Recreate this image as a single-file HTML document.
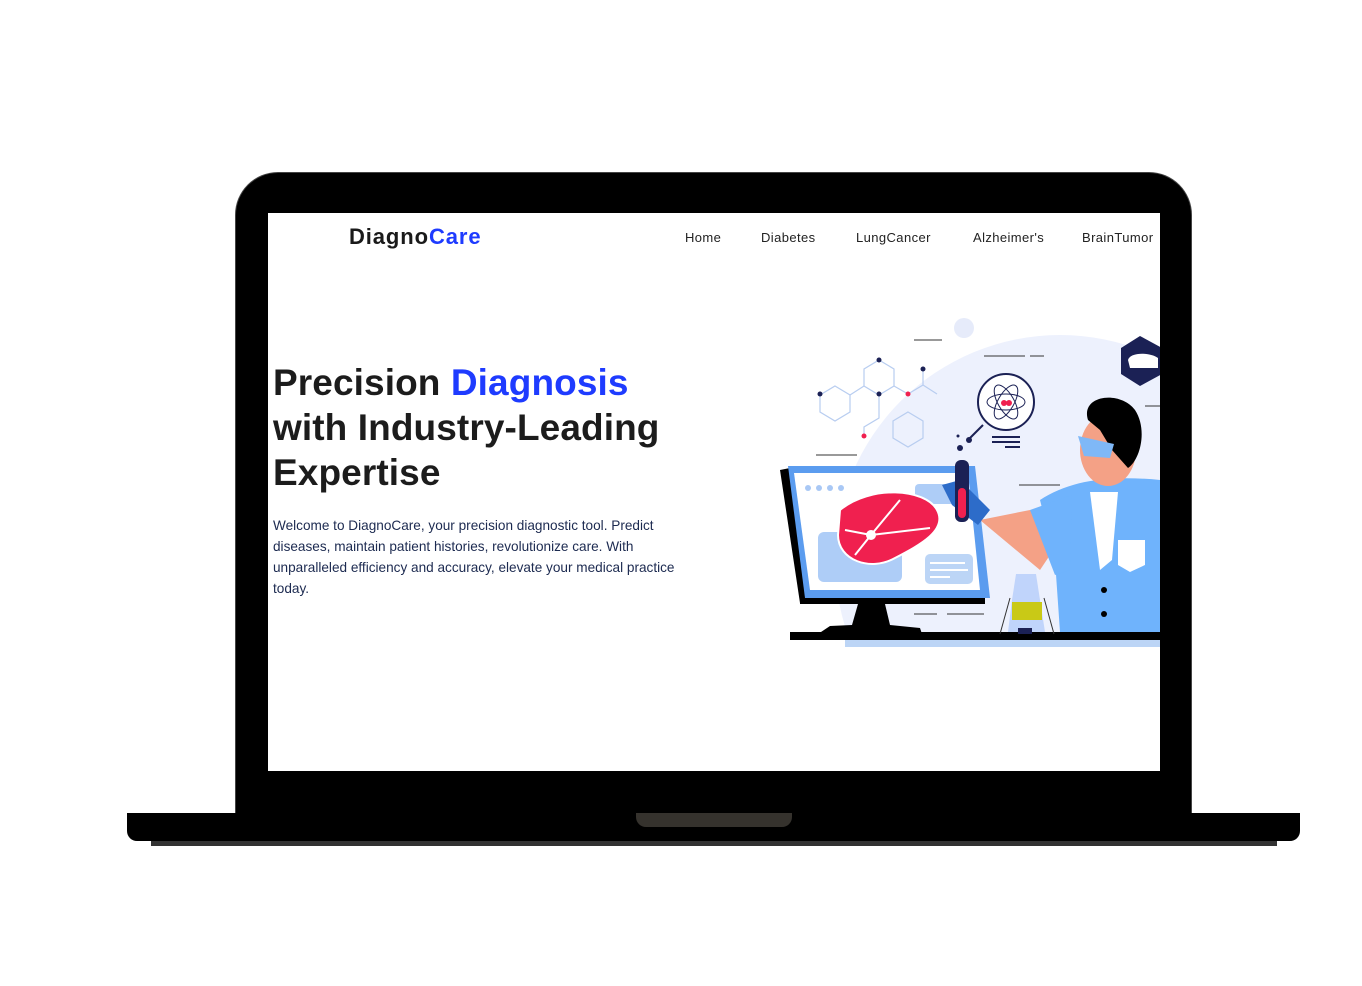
<!DOCTYPE html>
<html><head><meta charset="utf-8"><style>
html,body{margin:0;padding:0;width:1362px;height:986px;background:#fff;overflow:hidden;position:relative;font-family:"Liberation Sans",sans-serif}
.bezel{position:absolute;left:236px;top:173px;width:955px;height:640px;background:#000;border-radius:42px 42px 0 0;box-shadow:0 0 0 1px #444}
.screen{position:absolute;left:268px;top:213px;width:892px;height:558px;background:#fff;overflow:hidden}
.base{position:absolute;left:127px;top:813px;width:1173px;height:28px;background:#000;border-radius:0 0 10px 10px}
.shadow{position:absolute;left:151px;top:841px;width:1126px;height:5px;background:#333}
.notch{position:absolute;left:636px;top:813px;width:156px;height:14px;background:#35322d;border-radius:0 0 10px 10px}
.logo{position:absolute;left:81px;top:11px;font-size:22px;font-weight:bold;color:#1a1a1a;letter-spacing:.9px}
.logo span{color:#1e3bff}
.nav{position:absolute;top:17px;font-size:13px;color:#222;letter-spacing:.4px}
h1{position:absolute;left:5px;top:147px;margin:0;font-size:37px;line-height:45px;font-weight:bold;color:#1c1c1c;letter-spacing:.1px}
h1 span{color:#1e3bff}
p{position:absolute;left:5px;top:302px;width:420px;margin:0;font-size:13.6px;line-height:21px;color:#1c2a50}
</style></head><body>
<div class="bezel"></div>
<div class="screen">
<div class="logo">Diagno<span>Care</span></div>
<div class="nav" style="left:417px">Home</div>
<div class="nav" style="left:493px">Diabetes</div>
<div class="nav" style="left:588px">LungCancer</div>
<div class="nav" style="left:705px">Alzheimer's</div>
<div class="nav" style="left:814px">BrainTumor</div>
<h1>Precision <span>Diagnosis</span><br>with Industry-Leading<br>Expertise</h1>
<p>Welcome to DiagnoCare, your precision diagnostic tool. Predict diseases, maintain patient histories, revolutionize care. With unparalleled efficiency and accuracy, elevate your medical practice today.</p>
<svg style="position:absolute;left:-268px;top:-213px" width="1362" height="986">
<defs><clipPath id="c"><rect x="700" y="300" width="460" height="336"/></clipPath></defs>
<circle cx="1060" cy="560" r="225" fill="#edf1fd" clip-path="url(#c)"/>
<circle cx="964" cy="328" r="10" fill="#e6ebfa"/>
<g stroke="#333" stroke-width="1"><line x1="914" y1="340" x2="942" y2="340"/><line x1="984" y1="356" x2="1025" y2="356"/><line x1="1030" y1="356" x2="1044" y2="356"/><line x1="816" y1="455" x2="857" y2="455"/><line x1="1019" y1="485" x2="1060" y2="485"/><line x1="914" y1="614" x2="937" y2="614"/><line x1="947" y1="614" x2="984" y2="614"/><line x1="1145" y1="406" x2="1160" y2="406"/></g>
<g fill="none" stroke="#b8cdf0" stroke-width="1.2"><path d="M835,386 L850,395 L850,412 L835,421 L820,412 L820,395Z"/><path d="M879,360 L894,369 L894,386 L879,395 L864,386 L864,369Z"/><path d="M908,412 L923,421 L923,438 L908,447 L893,438 L893,421Z"/><path d="M850,395 L864,386 M879,395 L879,418 L864,427 L864,436 M908,394 L923,385 L923,370 M923,385 L937,394 M894,386 L908,394"/></g>
<g fill="#1b2155"><circle cx="879" cy="360" r="2.5"/><circle cx="820" cy="394" r="2.5"/><circle cx="879" cy="394" r="2.5"/><circle cx="923" cy="369" r="2.5"/><circle cx="960" cy="448" r="3"/><circle cx="969" cy="440" r="3"/><circle cx="958" cy="436" r="1.5"/></g>
<g fill="#f0204f"><circle cx="908" cy="394" r="2.5"/><circle cx="864" cy="436" r="2.5"/></g>
<circle cx="1006" cy="402" r="28" fill="#fff" stroke="#1b2155" stroke-width="2"/>
<g fill="none" stroke="#1b2155" stroke-width="1"><ellipse cx="1006" cy="402" rx="19" ry="8"/><ellipse cx="1006" cy="402" rx="19" ry="8" transform="rotate(60 1006 402)"/><ellipse cx="1006" cy="402" rx="19" ry="8" transform="rotate(-60 1006 402)"/></g>
<circle cx="1004" cy="403" r="3" fill="#f0204f"/><circle cx="1009" cy="403" r="3" fill="#f0204f"/>
<g stroke="#1b2155" stroke-width="2"><line x1="992" y1="437" x2="1020" y2="437"/><line x1="992" y1="442" x2="1020" y2="442"/><line x1="1005" y1="447" x2="1020" y2="447"/><line x1="983" y1="425" x2="970" y2="438"/></g>
<path d="M1140,336 L1162,348 L1162,374 L1140,386 L1121,374 L1121,348Z" fill="#1b2155"/>
<path d="M1128,360 C1130,352 1150,352 1158,358 L1158,368 L1130,368Z" fill="#fff"/>
<!-- monitor -->
<path d="M780,470 L790,468 L808,603 L800,603Z" fill="#000"/>
<path d="M800,598 L985,598 L985,604 L800,604Z" fill="#000"/>
<path d="M788,466 L975,466 L990,598 L805,598Z" fill="#5b9cef"/>
<path d="M794,473 L968,473 L980,590 L810,590Z" fill="#fff"/>
<g fill="#a9c8f5"><circle cx="808" cy="488" r="3"/><circle cx="819" cy="488" r="3"/><circle cx="830" cy="488" r="3"/><circle cx="841" cy="488" r="3"/></g>
<rect x="818" y="532" width="84" height="50" rx="6" fill="#aecdf7"/>
<rect x="925" y="554" width="48" height="30" rx="5" fill="#bcd5f6"/>
<g stroke="#fff" stroke-width="2"><line x1="930" y1="563" x2="965" y2="563"/><line x1="930" y1="570" x2="968" y2="570"/><line x1="930" y1="577" x2="950" y2="577"/></g>
<rect x="915" y="484" width="40" height="20" rx="4" fill="#aecdf7"/>
<path d="M840,510 C870,485 925,488 937,510 C948,530 920,545 895,558 C870,572 838,560 838,535Z" fill="#f0204f" stroke="#fff" stroke-width="2"/>
<g fill="none" stroke="#fff" stroke-width="2"><path d="M871,535 L900,500 M871,535 L845,530 M871,535 L930,528 M871,535 L855,555"/></g>
<circle cx="871" cy="535" r="5" fill="#fff"/>
<path d="M858,604 L885,604 L890,625 L920,628 L922,634 L818,634 L830,626 L852,625Z" fill="#000"/>
<rect x="790" y="632" width="370" height="8" fill="#000"/>
<rect x="845" y="640" width="315" height="7" fill="#bcd5f6"/>
<!-- flask -->
<path d="M1016,574 L1036,574 L1040,600 L1045,632 L1008,632 L1012,600Z" fill="#c0d4fb"/>
<rect x="1012" y="602" width="30" height="18" fill="#c9c916"/>
<rect x="1018" y="628" width="14" height="6" fill="#1b2155"/>
<path d="M1000,634 L1010,598 M1054,634 L1044,598" stroke="#333"/>
<!-- scientist -->
<path d="M1040,500 C1070,480 1110,475 1160,480 L1160,632 L1060,632 L1055,560 Z" fill="#6fb3fc"/>
<path d="M1090,492 L1118,492 L1112,560 L1100,570Z" fill="#fff"/>
<path d="M1118,540 L1145,540 L1145,565 L1130,572 L1118,565Z" fill="#fff"/>
<path d="M980,520 L1040,570 L1060,540 L1030,510 Z" fill="#f4a186"/>
<path d="M1030,510 L1072,495 L1070,570 L1055,575Z" fill="#6fb3fc"/>
<ellipse cx="1108" cy="450" rx="28" ry="36" fill="#f4a186"/>
<path d="M1088,420 C1080,395 1120,390 1135,410 C1148,430 1140,460 1128,468 L1112,450 L1100,430Z" fill="#000"/>
<path d="M1078,436 L1114,444 L1110,458 L1084,456Z" fill="#7fb8f7"/>
<path d="M942,485 L960,480 L990,510 L978,525 L952,505Z" fill="#2d6cc9"/>
<rect x="955" y="460" width="14" height="62" rx="6" fill="#1b2155"/>
<rect x="958" y="488" width="8" height="30" rx="4" fill="#f0204f"/>
<circle cx="1104" cy="590" r="3" fill="#000"/><circle cx="1104" cy="614" r="3" fill="#000"/>
</svg>
</div>
<div class="base"></div>
<div class="shadow"></div>
<div class="notch"></div>
</body></html>
